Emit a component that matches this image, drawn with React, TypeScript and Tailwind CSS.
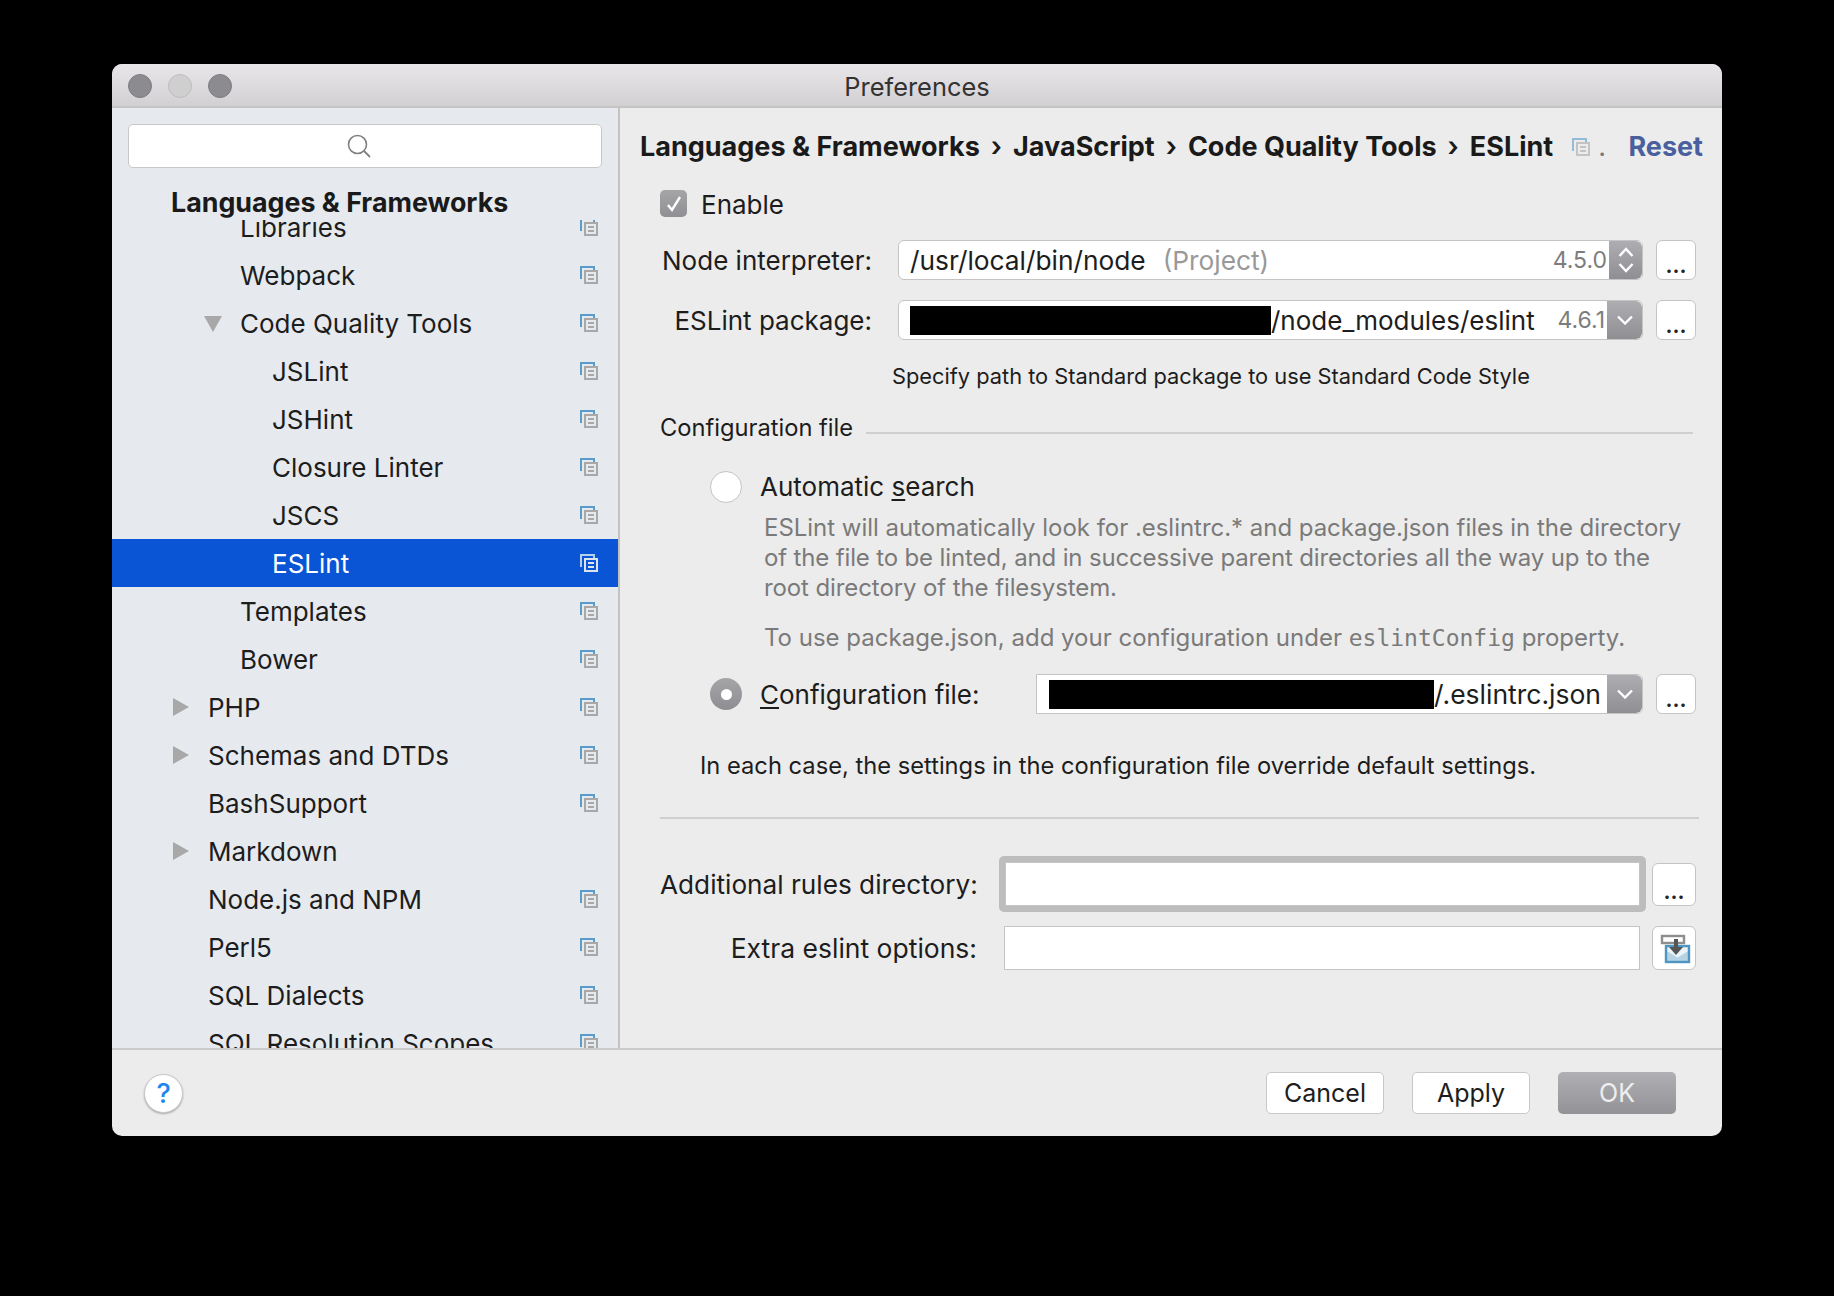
import { ReactNode } from "react";

type TreeRow = {
  label: string;
  indent: number;
  arrow?: "down" | "right";
  noIcon?: boolean;
  selected?: boolean;
};

const treeRows: TreeRow[] = [
  { label: "Libraries", indent: 128 },
  { label: "Webpack", indent: 128 },
  { label: "Code Quality Tools", indent: 128, arrow: "down" },
  { label: "JSLint", indent: 160 },
  { label: "JSHint", indent: 160 },
  { label: "Closure Linter", indent: 160 },
  { label: "JSCS", indent: 160 },
  { label: "ESLint", indent: 160, selected: true },
  { label: "Templates", indent: 128 },
  { label: "Bower", indent: 128 },
  { label: "PHP", indent: 96, arrow: "right" },
  { label: "Schemas and DTDs", indent: 96, arrow: "right" },
  { label: "BashSupport", indent: 96 },
  { label: "Markdown", indent: 96, arrow: "right", noIcon: true },
  { label: "Node.js and NPM", indent: 96 },
  { label: "Perl5", indent: 96 },
  { label: "SQL Dialects", indent: 96 },
  { label: "SQL Resolution Scopes", indent: 96 },
];

const ProjectIcon = ({ selected, size = 18 }: { selected?: boolean; size?: number }) => (
  <svg width={size} height={size} viewBox="0 0 18 18" fill="none">
    <path d="M1 13V1h13v3" stroke={selected ? "#b5d0ee" : "#5b9ccb"} strokeWidth="2" />
    <rect x="5" y="5" width="12" height="12" stroke={selected ? "#dde3ea" : "#a8a8a8"} strokeWidth="2" />
    <path d="M8 9h6M8 13h6" stroke={selected ? "#dde3ea" : "#a8a8a8"} strokeWidth="2" />
  </svg>
);

const DotsButton = ({ className = "w-[40px] h-[40px]" }: { className?: string }) => (
  <button
    type="button"
    className={`${className} bg-white border border-[#c4c4c4] rounded-[6px] flex justify-center items-end pb-[3px] text-[22px] leading-[22px] font-semibold text-[#222] shrink-0`}
  >
    ...
  </button>
);

const SelectCap = ({ children, width }: { children: ReactNode; width: string }) => (
  <div className={`${width} self-stretch bg-gradient-to-b from-[#aeaeb2] to-[#8e8e93] rounded-r-[6px] flex items-center justify-center shrink-0`}>
    {children}
  </div>
);

const ChevronDown = () => (
  <svg width="16" height="10" viewBox="0 0 16 10" fill="none">
    <path d="M1 1.5l7 7 7-7" stroke="#fff" strokeWidth="2.4" />
  </svg>
);

const Updown = () => (
  <svg width="16" height="30" viewBox="0 0 16 30" fill="none">
    <path d="M1.5 11l6.5-7 6.5 7M1.5 19l6.5 7 6.5-7" stroke="#fff" strokeWidth="2.4" />
  </svg>
);

const FieldLabel = ({ children, width }: { children: ReactNode; width: string }) => (
  <div className={`${width} text-right shrink-0 text-[#1d1d1d] whitespace-nowrap`}>{children}</div>
);

const App = () => {
  return (
    <div className="w-[1834px] h-[1296px] bg-black pt-[64px] pl-[112px] font-['Inter',sans-serif] text-[26px] text-[#1d1d1d] overflow-hidden">
      <div className="w-[1610px] h-[1072px] rounded-[10px] overflow-hidden flex flex-col bg-[#ececec]">
        {/* title bar */}
        <div className="h-[44px] shrink-0 flex items-center pt-[2px] pl-[16px] gap-[16px] bg-gradient-to-b from-[#e8e6e8] to-[#d2d0d2] border-b-2 border-[#c4c4c4]">
          <div className="w-[24px] h-[24px] rounded-full bg-[#8c8b90] border border-[#7d7c80]" />
          <div className="w-[24px] h-[24px] rounded-full bg-[#d0cfd0] border border-[#bdbcbd]" />
          <div className="w-[24px] h-[24px] rounded-full bg-[#8c8b90] border border-[#7d7c80]" />
          <div className="flex-1 text-center pr-[136px] pt-[2px] text-[25.4px] text-[#333]">Preferences</div>
        </div>

        <div className="flex flex-1 min-h-0">
          {/* sidebar */}
          <div className="w-[508px] shrink-0 bg-[#e6eaef] border-r-2 border-[#c2c2c2] flex flex-col pt-[16px]">
            <div className="mx-[16px] h-[44px] shrink-0 bg-white border border-[#c8c8c8] rounded-[5px] flex items-center justify-center pr-[12px]">
              <svg width="26" height="26" viewBox="0 0 26 26" fill="none">
                <circle cx="11.5" cy="11.5" r="9" stroke="#808080" strokeWidth="1.6" />
                <path d="M18 18l6 6" stroke="#808080" strokeWidth="1.8" />
              </svg>
            </div>
            <div className="pl-[59px] pt-[17px] h-[52px] shrink-0 flex items-center text-[26.8px] font-bold text-[#1a1a1a] whitespace-nowrap">
              Languages &amp; Frameworks
            </div>
            <div className="flex-1 min-h-0 overflow-hidden">
              <div className="-mt-[17px]">
                {treeRows.map((row) => (
                  <div
                    key={row.label}
                    style={{ paddingLeft: row.indent }}
                    className={`relative h-[48px] flex items-center ${row.selected ? "bg-[#0a54d6] text-white" : ""}`}
                  >
                    {row.arrow === "down" && (
                      <div className="absolute left-[92px] top-[17px] w-0 h-0 border-l-[9px] border-r-[9px] border-t-[16px] border-l-transparent border-r-transparent border-t-[#a8a8a8]" />
                    )}
                    {row.arrow === "right" && (
                      <div className="absolute left-[61px] top-[15px] w-0 h-0 border-t-[9px] border-b-[9px] border-l-[16px] border-t-transparent border-b-transparent border-l-[#a8a8a8]" />
                    )}
                    <span className="flex-1">{row.label}</span>
                    {!row.noIcon && (
                      <span className="mr-[20px]">
                        <ProjectIcon selected={row.selected} />
                      </span>
                    )}
                  </div>
                ))}
              </div>
            </div>
          </div>

          {/* main panel */}
          <div className="flex-1 min-w-0 pt-[19px] pl-[40px] pr-[26px]">
            <div className="-ml-[20px] -mr-[7px] h-[40px] flex items-center text-[27px] font-bold text-[#1a1a1a] whitespace-nowrap">
              <span>Languages &amp; Frameworks</span>
              <span className="mx-[11px] font-semibold">›</span>
              <span>JavaScript</span>
              <span className="mx-[11px] font-semibold">›</span>
              <span>Code Quality Tools</span>
              <span className="mx-[11px] font-semibold">›</span>
              <span>ESLint</span>
              <span className="ml-[19px] opacity-60">
                <ProjectIcon />
              </span>
              <span className="ml-[8px] font-normal text-[#777]">.</span>
              <span className="ml-auto text-[#4a5f9e]">Reset</span>
            </div>

            <div className="mt-[23px] h-[27px] flex items-center gap-[14px]">
              <div className="w-[27px] h-[27px] rounded-[5px] bg-gradient-to-b from-[#a5a5a8] to-[#909094] flex items-center justify-center">
                <svg width="18" height="18" viewBox="0 0 18 18" fill="none">
                  <path d="M3 10l4 5 8-13" stroke="#fff" strokeWidth="2.4" />
                </svg>
              </div>
              <span className="pt-[2px]">Enable</span>
            </div>

            <div className="mt-[23px] h-[40px] flex items-center">
              <FieldLabel width="w-[212px]">Node interpreter:</FieldLabel>
              <div className="ml-[26px] h-full flex-1 min-w-0 flex items-center bg-white border border-[#c4c4c4] rounded-[6px] overflow-hidden">
                <span className="pl-[11px] pt-[2px] text-[26.3px]">/usr/local/bin/node</span>
                <span className="ml-[17px] pt-[2px] text-[26.3px] text-[#999]">(Project)</span>
                <span className="ml-auto mr-[2px] text-[23px] text-[#7d7d7d]">4.5.0</span>
                <SelectCap width="w-[33px]"><Updown /></SelectCap>
              </div>
              <span className="ml-[13px]"><DotsButton /></span>
            </div>

            <div className="mt-[20px] h-[40px] flex items-center">
              <FieldLabel width="w-[212px]">ESLint package:</FieldLabel>
              <div className="ml-[26px] h-full flex-1 min-w-0 flex items-center bg-white border border-[#c4c4c4] rounded-[6px] overflow-hidden">
                <div className="ml-[11px] w-[361px] h-[29px] bg-black shrink-0" />
                <span>/node_modules/eslint</span>
                <span className="ml-auto mr-[2px] text-[23px] text-[#7d7d7d]">4.6.1</span>
                <SelectCap width="w-[35px]"><ChevronDown /></SelectCap>
              </div>
              <span className="ml-[13px]"><DotsButton /></span>
            </div>

            <div className="mt-[21px] ml-[232px] h-[30px] flex items-center text-[21.8px] text-[#1d1d1d] whitespace-nowrap">
              Specify path to Standard package to use Standard Code Style
            </div>

            <div className="mt-[22px] flex items-center h-[30px]">
              <span className="whitespace-nowrap text-[23.7px]">Configuration file</span>
              <div className="ml-[13px] flex-1 h-[2px] mt-[10px] mr-[3px] bg-[#cfcfcf]" />
            </div>

            <div className="mt-[28px] ml-[50px] h-[32px] flex items-center gap-[18px]">
              <div className="w-[32px] h-[32px] rounded-full bg-white border border-[#c4c4c4]" />
              <span className="pb-[2px]">Automatic <span className="underline underline-offset-[3px]">s</span>earch</span>
            </div>

            <div className="mt-[10px] ml-[104px] text-[24px] leading-[30px] text-[#7a7a7a] whitespace-nowrap">
              <p className="tracking-[-0.03px]">ESLint will automatically look for .eslintrc.* and package.json files in the directory</p>
              <p className="tracking-[-0.15px]">of the file to be linted, and in successive parent directories all the way up to the</p>
              <p className="tracking-[-0.1px]">root directory of the filesystem.</p>
              <p className="mt-[20px]">
                To use package.json, add your configuration under{" "}
                <span className="font-['DejaVu_Sans_Mono',monospace] text-[23px]">eslintConfig</span> property.
              </p>
            </div>

            <div className="mt-[21px] ml-[50px] h-[40px] flex items-center">
              <div className="w-[32px] h-[32px] rounded-full bg-gradient-to-b from-[#a5a5a8] to-[#8e8e92] flex items-center justify-center">
                <div className="w-[11px] h-[11px] rounded-full bg-white" />
              </div>
              <span className="ml-[18px] whitespace-nowrap">
                <span className="underline underline-offset-[3px]">C</span>onfiguration file:
              </span>
              <div className="ml-auto w-[607px] h-full flex items-center bg-white border border-[#c4c4c4] rounded-r-[6px] overflow-hidden">
                <div className="ml-[12px] w-[385px] h-[29px] bg-black shrink-0" />
                <span className="pt-[2px] text-[26.5px]">/.eslintrc.json</span>
                <div className="flex-1" />
                <SelectCap width="w-[35px]"><ChevronDown /></SelectCap>
              </div>
              <span className="ml-[13px]"><DotsButton /></span>
            </div>

            <div className="mt-[36px] ml-[40px] h-[32px] flex items-center text-[23.7px] whitespace-nowrap">
              In each case, the settings in the configuration file override default settings.
            </div>

            <div className="mt-[35px] mr-[-3px] h-[2px] bg-[#cfcfcf]" />

            <div className="mt-[37px] h-[56px] flex items-center">
              <FieldLabel width="w-auto pt-[2px] text-[26.2px]">Additional rules directory:</FieldLabel>
              <div className="ml-auto w-[647px] h-full bg-[#bdbdbd] rounded-[5px] p-[6px] mr-[6px]">
                <div className="w-full h-full bg-white border border-[#c4c4c4]" />
              </div>
              <DotsButton className="w-[44px] h-[43px]" />
            </div>

            <div className="mt-[14px] h-[44px] flex items-center">
              <FieldLabel width="w-[317px] pt-[2px] text-[26.5px]">Extra eslint options:</FieldLabel>
              <div className="ml-[27px] w-[636px] h-full bg-white border border-[#c4c4c4]" />
              <button type="button" className="ml-[12px] w-[44px] h-full bg-white border border-[#c4c4c4] rounded-[6px] flex items-center justify-center">
                <svg width="34" height="32" viewBox="0 0 34 32" fill="none">
                  <rect x="9" y="14" width="23" height="16" fill="#b5d3e4" stroke="#4e95c2" strokeWidth="2.4" />
                  <path d="M10.5 15.5h20v4l-10 6-10-6z" fill="#eaf3f8" />
                  <rect x="5" y="4" width="22" height="7" fill="#fff" stroke="#8e8e8e" strokeWidth="2.4" />
                  <path d="M17 7h4v8h5l-7 8-7-8h5z" fill="#555" />
                </svg>
              </button>
            </div>
          </div>
        </div>

        {/* footer */}
        <div className="h-[88px] shrink-0 border-t-2 border-[#cacaca] flex items-center text-[25px] pl-[32px] pr-[46px]">
          <button type="button" className="w-[39px] h-[39px] rounded-full bg-white border border-[#c8c8c8] shadow-[0_1px_2px_rgba(0,0,0,0.3)] text-[#1e86f0] font-medium text-[27px] leading-none">
            ?
          </button>
          <button type="button" className="ml-auto w-[118px] h-[42px] pt-[1px] bg-white border border-[#c8c8c8] rounded-[5px]">Cancel</button>
          <button type="button" className="ml-[28px] w-[118px] h-[42px] pt-[1px] bg-white border border-[#c8c8c8] rounded-[5px]">Apply</button>
          <button type="button" className="ml-[28px] w-[118px] h-[42px] pt-[1px] bg-gradient-to-b from-[#b0b0b4] to-[#939397] rounded-[5px] text-[#eee]">OK</button>
        </div>
      </div>
    </div>
  );
};

export default App;
